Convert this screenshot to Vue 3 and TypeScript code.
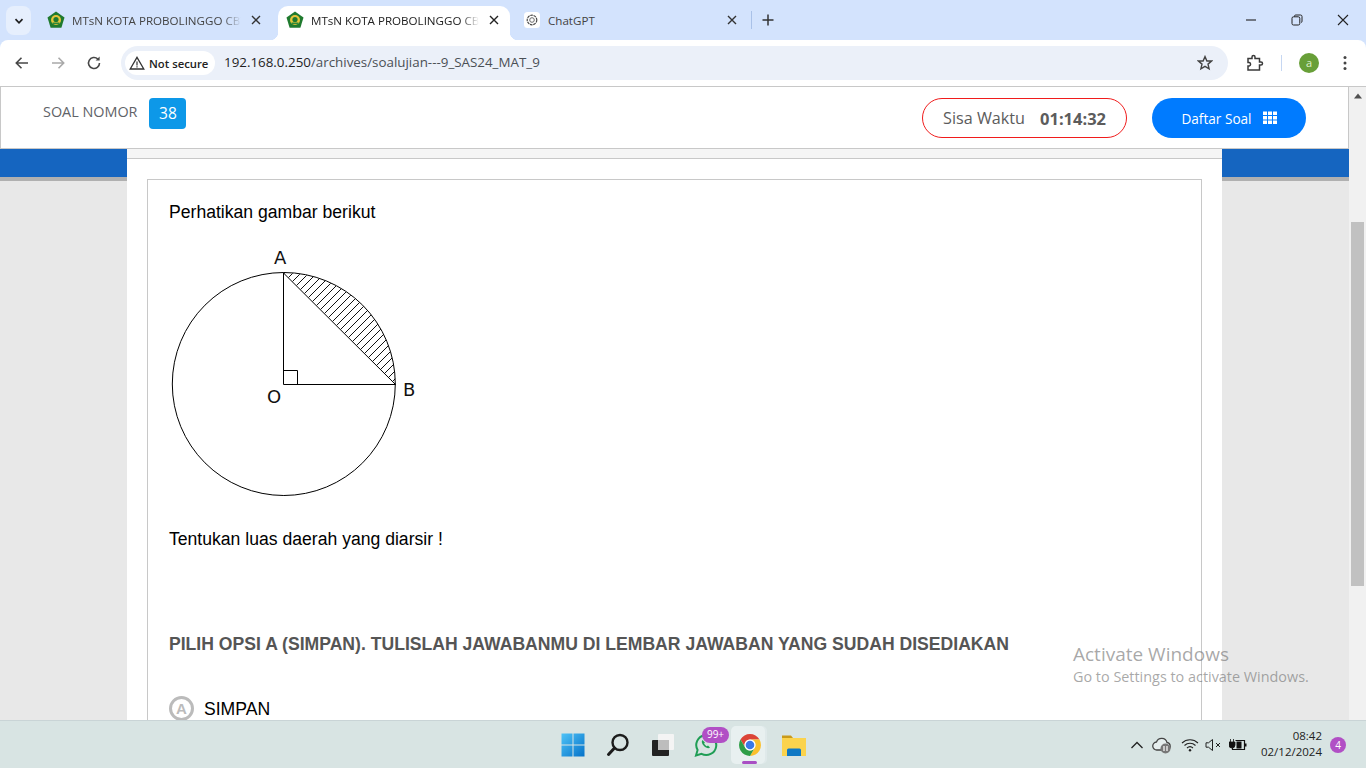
<script setup lang="ts">
const hatch: number[] = []
for (let x = 150; x < 420; x += 8) hatch.push(x)
</script>

<template>
  <div class="screen">
    <div class="tabstrip">
      <button class="tab-menu">
        <svg width="12" height="12" viewBox="0 0 12 12"><path d="M2.5 4.2 6 7.8l3.5-3.6" fill="none" stroke="#1f1f1f" stroke-width="1.7" /></svg>
      </button>
      <div class="tab first">
        <svg class="fav" viewBox="0 0 18 18"><path d="M9 .5 17.500 6.6 14.400 16.800H3.600L.5 6.6Z" fill="#1f7a2e" /><circle cx="9" cy="9" r="5" fill="#e5c53a" /><circle cx="9" cy="8.500" r="2.600" fill="#1f7a2e" /><path d="M5.500 11.500h7v1.600h-7z" fill="#2d8a3b" /></svg>
        <span class="tab-title">MTsN KOTA PROBOLINGGO CBT</span>
        <svg class="tab-x" viewBox="0 0 10 10"><path d="M1 1l8 8M9 1l-8 8" stroke="#333" stroke-width="1.4" /></svg>
      </div>
      <div class="tab active">
        <svg class="fav" viewBox="0 0 18 18"><path d="M9 .5 17.500 6.6 14.400 16.800H3.600L.5 6.6Z" fill="#1f7a2e" /><circle cx="9" cy="9" r="5" fill="#e5c53a" /><circle cx="9" cy="8.500" r="2.600" fill="#1f7a2e" /><path d="M5.500 11.500h7v1.600h-7z" fill="#2d8a3b" /></svg>
        <span class="tab-title">MTsN KOTA PROBOLINGGO CBT</span>
        <svg class="tab-x" viewBox="0 0 10 10"><path d="M1 1l8 8M9 1l-8 8" stroke="#222" stroke-width="1.4" /></svg>
      </div>
      <div class="tab third">
        <svg class="fav gpt" viewBox="0 0 18 18"><rect width="18" height="18" rx="4" fill="#fff" /><circle cx="9" cy="9" r="5.400" fill="none" stroke="#444" stroke-width="1.300" stroke-dasharray="3 .8" /><circle cx="9" cy="9" r="2.600" fill="none" stroke="#666" stroke-width="1.100" /></svg>
        <span class="tab-title">ChatGPT</span>
        <svg class="tab-x" viewBox="0 0 10 10"><path d="M1 1l8 8M9 1l-8 8" stroke="#333" stroke-width="1.4" /></svg>
      </div>
      <span class="tab-sep"></span>
      <svg class="tab-plus" viewBox="0 0 12 12"><path d="M6 .5v11M.5 6h11" stroke="#333" stroke-width="1.5" /></svg>
      <div class="win-btns">
        <svg viewBox="0 0 12 12"><path d="M1 6h10" stroke="#222" stroke-width="1.1" /></svg>
        <svg viewBox="0 0 12 12"><path d="M3.500 2.500V2a1.200 1.200 0 0 1 1.200-1H9.500A1.500 1.500 0 0 1 11 2.500v4.800A1.200 1.200 0 0 1 10 8.500" fill="none" stroke="#222" /><rect x="1" y="2.800" width="7.800" height="8.200" rx="1.500" fill="none" stroke="#222" /></svg>
        <svg viewBox="0 0 12 12"><path d="M1 1l10 10M11 1 1 11" stroke="#222" stroke-width="1.1" /></svg>
      </div>
    </div>

    <div class="toolbar">
      <svg class="nav" viewBox="0 0 16 16"><path d="M14 8H2.500M7.500 2.800 2.300 8l5.200 5.200" fill="none" stroke="#474747" stroke-width="1.600" /></svg>
      <svg class="nav" viewBox="0 0 16 16"><path d="M2 8h11.500M8.500 2.800 13.700 8l-5.200 5.200" fill="none" stroke="#a9a9a9" stroke-width="1.600" /></svg>
      <svg class="nav reload" viewBox="0 0 16 16"><path d="M13.500 8A5.500 5.500 0 1 1 11.800 4" fill="none" stroke="#474747" stroke-width="1.600" /><path d="M13.600 1.500v4h-4z" fill="#474747" /></svg>
      <div class="omnibox">
        <div class="chip">
          <svg width="16" height="14" viewBox="0 0 16 14"><path d="M8 1.300 14.800 13H1.200Z" fill="none" stroke="#333" stroke-width="1.300" /><path d="M8 5.500v4M8 10.300v1.300" stroke="#333" stroke-width="1.200" /></svg>
          <span>Not secure</span>
        </div>
        <span class="url"><b>192.168.0.250</b>/archives/soalujian---9_SAS24_MAT_9</span>
        <svg class="star" viewBox="0 0 16 16"><path d="M8 1.600 9.900 6h4.700l-3.600 3.100 1.100 4.700L8 11.300l-4.100 2.500L5 9.100 1.400 6h4.700Z" fill="none" stroke="#444" stroke-width="1.400" /></svg>
      </div>
      <svg class="ext" viewBox="0 0 18 18"><path d="M2 4.500h4V3a1.500 1.500 0 0 1 3 0v1.500h4.500V8H15a1.500 1.500 0 0 1 0 3h-1.500v5H2v-4h1.200a1.800 1.800 0 0 0 0-3.500H2Z" fill="none" stroke="#3a3a3a" stroke-width="1.500" /></svg>
      <span class="bar-sep"></span>
      <span class="avatar">a</span>
      <svg class="dots" viewBox="0 0 4 16"><circle cx="2" cy="2.500" r="1.500" fill="#444" /><circle cx="2" cy="8" r="1.500" fill="#444" /><circle cx="2" cy="13.500" r="1.500" fill="#444" /></svg>
    </div>

    <div class="viewport">
      <div class="page">
        <header class="exam-head">
          <div class="nomor">
            <span class="nomor-label">SOAL NOMOR</span>
            <span class="nomor-val">38</span>
          </div>
          <div class="timer">
            <span>Sisa Waktu</span>
            <b>01:14:32</b>
          </div>
          <button class="daftar">
            <span>Daftar Soal</span>
            <svg width="14" height="14" viewBox="0 0 14 14"><path d="M0 .5h4v3.500H0zM5 .5h4v3.500H5zM10 .5h4v3.500h-4zM0 5h4v3.500H0zM5 5h4v3.500H5zM10 5h4v3.500h-4zM0 9.500h4V13H0zM5 9.500h4V13H5zM10 9.500h4V13h-4z" fill="#fff" /></svg>
          </button>
        </header>
        <div class="stage">
          <div class="sheet">
            <div class="sheet-top"></div>
            <div class="qbox">
              <p class="q-first">Perhatikan gambar berikut</p>
              <svg class="figure" width="260" height="265" viewBox="169 240 260 265">
                <defs>
                  <clipPath id="seg"><path d="M284 273A111.500 111.500 0 0 1 395.500 384Z" /></clipPath>
                </defs>
                <g clip-path="url(#seg)" shape-rendering="crispEdges">
                  <line v-for="x in hatch" :key="x" :x1="x" y1="400" :x2="x + 150" y2="250" stroke="#111" stroke-width="1" />
                </g>
                <g fill="none" stroke="#000" stroke-width="1">
                  <circle cx="283.800" cy="384" r="111.500" />
                  <path d="M283.500 273V384.500H395.500L283.500 273" />
                  <path d="M283.500 370.500H297.500V384.500" />
                </g>
                <text x="274" y="264">A</text>
                <text x="403" y="396">B</text>
                <text x="267" y="403">O</text>
              </svg>
              <p class="q-second">Tentukan luas daerah yang diarsir !</p>
              <p class="q-note">PILIH OPSI A (SIMPAN). TULISLAH JAWABANMU DI LEMBAR JAWABAN YANG SUDAH DISEDIAKAN</p>
              <div class="option">
                <span class="opt-letter">A</span>
                <span class="opt-text">SIMPAN</span>
              </div>
            </div>
          </div>
        </div>
      </div>
      <div class="scrollbar">
        <svg class="sb-arrow" viewBox="0 0 10 6"><path d="M5 .5 9 5.500H1Z" fill="#505050" /></svg>
        <div class="sb-thumb"></div>
      </div>
      <div class="activate">
        <div class="act-1">Activate Windows</div>
        <div class="act-2">Go to Settings to activate Windows.</div>
      </div>
    </div>

    <div class="taskbar">
      <div class="task-icons">
        <svg class="ti" viewBox="0 0 24 24">
          <defs><linearGradient id="w" x1="0" y1="0" x2="1" y2="1"><stop offset="0" stop-color="#4fc3f7" /><stop offset="1" stop-color="#0572c9" /></linearGradient></defs>
          <path d="M.5.500h11v11H.5zM12.500.500h11v11h-11zM.5 12.500h11v11H.5zM12.500 12.500h11v11h-11z" fill="url(#w)" />
        </svg>
        <svg class="ti" viewBox="0 0 24 24"><circle cx="14" cy="9.500" r="7.500" fill="none" stroke="#1c1c1c" stroke-width="2.400" /><path d="M8.500 15 2.500 21.500" stroke="#1c1c1c" stroke-width="3" stroke-linecap="round" /></svg>
        <svg class="ti" viewBox="0 0 24 24"><rect x="7" y="1" width="16" height="16" rx="1" fill="#f4f4f4" /><rect x="1" y="7" width="17" height="16" rx="1" fill="#222" /><rect x="7" y="7" width="11" height="10" fill="#bdbdbd" /></svg>
        <div class="ti-wrap">
          <svg class="ti" viewBox="0 0 24 24"><path d="M2 22.500 3.600 17A10 10 0 1 1 7.500 20.800Z" fill="none" stroke="#1f9d55" stroke-width="2" /><path d="M8.500 7c-1.500 1.500-.5 4 1.500 6s4.500 3 6 1.500l-2-2-1.200.8c-1-.5-2.200-1.700-2.700-2.700l.8-1.200Z" fill="#1f9d55" /></svg>
          <span class="badge-99">99+</span>
        </div>
        <div class="chrome-slot">
          <svg class="ti" viewBox="0 0 24 24">
            <path d="M2.500 6.500A11 11 0 0 1 21.500 6.500H12A5.500 5.500 0 0 0 7.240 14.750Z" fill="#db4437" />
            <path d="M21.500 6.500A11 11 0 0 1 12 23L16.760 14.750A5.500 5.500 0 0 0 12 6.500Z" fill="#fbc02d" />
            <path d="M12 23A11 11 0 0 1 2.500 6.500L7.240 14.750A5.500 5.500 0 0 0 16.760 14.750Z" fill="#2e9e47" />
            <circle cx="12" cy="12" r="5.500" fill="#fff" /><circle cx="12" cy="12" r="4.300" fill="#3b78e7" />
          </svg>
          <span class="run-dot"></span>
        </div>
        <svg class="ti" viewBox="0 0 24 24"><path d="M0 2.500h9l2 2.500H0z" fill="#c99a1a" /><path d="M0 5h24v18H0z" fill="#fbd34d" /><path d="M5 17a1.500 1.500 0 0 1 1.500-1.500h11A1.500 1.500 0 0 1 19 17v6H5z" fill="#0f78c4" /></svg>
      </div>
      <div class="tray">
        <svg class="tr chev" viewBox="0 0 14 10"><path d="M1.500 8 7 2.500 12.500 8" fill="none" stroke="#222" stroke-width="1.300" /></svg>
        <svg class="tr cloud" viewBox="0 0 20 18"><path d="M5 14a4 4 0 0 1-.5-8A5.500 5.500 0 0 1 15 6.500 3.800 3.800 0 0 1 15 14Z" fill="#e6eeee" stroke="#444" stroke-width="1.300" /><circle cx="13.500" cy="12.500" r="5" fill="#777" /><path d="M12 10v5M15 10v5" stroke="#fff" stroke-width="1.200" /></svg>
        <svg class="tr wifi" viewBox="0 0 18 14"><path d="M1 5a11.500 11.500 0 0 1 16 0M3.500 7.500a8 8 0 0 1 11 0M6 10a4.500 4.500 0 0 1 6 0" fill="none" stroke="#222" stroke-width="1.100" /><circle cx="9" cy="12.300" r="1.200" fill="#222" /></svg>
        <svg class="tr vol" viewBox="0 0 18 14"><path d="M1 4.800h2.500L7.500 1.500v11L3.500 9.200H1Z" fill="none" stroke="#222" /><path d="M11 5l4 4M15 5l-4 4" stroke="#222" /></svg>
        <svg class="tr bat" viewBox="0 0 18 14"><path d="M1.500 1v3M4.500 1v3M0 4h6v3a3 3 0 0 1-6 0Z" stroke="#111" fill="#111" stroke-width=".8" /><path d="M6.500 2.500h9v9h-12v-1.500" fill="none" stroke="#111" stroke-width="1.200" /><path d="M7.500 3.500h5v7h-5z" fill="#111" /><path d="M16 5.500h1.500v3H16z" fill="#111" /></svg>
        <div class="clock">
          <span>08:42</span>
          <span>02/12/2024</span>
        </div>
        <span class="notif">4</span>
      </div>
    </div>
  </div>
</template>

<style scoped>
.screen {
  width: 1366px;
  height: 768px;
  display: flex;
  flex-direction: column;
  overflow: hidden;
  background: #d3e3fd;
  font-family: "Open Sans", "Noto Sans", sans-serif;
  color: #222;
}
.tabstrip {
  height: 40px;
  flex: none;
  background: #d3e3fd;
  display: flex;
  align-items: flex-start;
  padding-left: 6px;
  box-sizing: border-box;
}
.tab-menu {
  width: 25px;
  height: 29px;
  margin-top: 6px;
  border: 0;
  border-radius: 8px;
  background: #e6effd;
  display: flex;
  align-items: center;
  justify-content: center;
  padding: 0;
}
.tab {
  height: 34px;
  margin-top: 6px;
  box-sizing: border-box;
  display: flex;
  align-items: center;
  padding-bottom: 6px;
  font-size: 11.6px;
  color: #444;
  position: relative;
}
.tab.first {
  width: 239px;
  margin-left: 8px;
  padding-left: 8px;
  padding-right: 17px;
}
.tab.active {
  width: 232px;
  padding-left: 8px;
  padding-right: 11px;
  background: #fff;
  border-radius: 10px 10px 0 0;
  color: #222;
}
.tab.active::before,
.tab.active::after {
  content: "";
  position: absolute;
  bottom: 0;
  width: 8px;
  height: 8px;
}
.tab.active::before {
  left: -8px;
  background: radial-gradient(circle at 0 0, transparent 8px, #fff 8.5px);
}
.tab.active::after {
  right: -8px;
  background: radial-gradient(circle at 100% 0, transparent 8px, #fff 8.5px);
}
.tab.third {
  width: 235px;
  padding-left: 14px;
  padding-right: 8px;
}
.fav {
  width: 18px;
  height: 18px;
  flex: none;
  margin-right: 7px;
}
.fav.gpt {
  width: 16px;
  height: 16px;
  margin-right: 8px;
}
.tab-title {
  flex: 1;
  white-space: nowrap;
  overflow: hidden;
  min-width: 0;
  -webkit-mask-image: linear-gradient(to left, transparent 0, #000 18px);
  mask-image: linear-gradient(to left, transparent 0, #000 18px);
}
.third .tab-title {
  -webkit-mask-image: none;
  mask-image: none;
}
.tab-x {
  width: 10px;
  height: 10px;
  flex: none;
  margin-left: 10px;
}
.tab-sep {
  width: 1px;
  height: 18px;
  background: #a9c1e8;
  margin: 11px 0 0 6px;
}
.tab-plus {
  width: 12px;
  height: 12px;
  margin: 14px 0 0 10px;
}
.win-btns {
  margin-left: auto;
  display: flex;
  gap: 34px;
  padding: 14px 17px 0 0;
}
.win-btns svg {
  width: 12px;
  height: 12px;
}
.toolbar {
  height: 47px;
  flex: none;
  background: #fff;
  border-bottom: 1px solid #c8c8c8;
  box-sizing: border-box;
  display: flex;
  align-items: center;
  padding: 0 14px;
  border-radius: 8px 8px 0 0;
}
.nav {
  width: 16px;
  height: 16px;
  flex: none;
  margin-right: 20px;
}
.nav.reload {
  margin-right: 19px;
}
.omnibox {
  width: 1107px;
  height: 34px;
  flex: none;
  border-radius: 17px;
  background: #ebf0f9;
  display: flex;
  align-items: center;
  padding: 0 15px 0 4px;
  box-sizing: border-box;
}
.chip {
  height: 24px;
  width: 90px;
  box-sizing: border-box;
  border-radius: 12px;
  background: #fff;
  display: flex;
  align-items: center;
  gap: 4px;
  padding-left: 4px;
  font-size: 11.3px;
  font-weight: 600;
  color: #222;
  flex: none;
}
.url {
  margin: -2px 0 0 9px;
  font-size: 13.37px;
  color: #4a4f55;
  flex: 1;
}
.url b {
  font-weight: 400;
  color: #1f1f1f;
}
.star {
  width: 16px;
  height: 16px;
}
.ext {
  width: 18px;
  height: 18px;
  margin-left: 18px;
  flex: none;
}
.bar-sep {
  width: 1px;
  height: 16px;
  background: #c6d7f2;
  margin-left: 17px;
}
.avatar {
  width: 20px;
  height: 20px;
  border-radius: 50%;
  background: #689f38;
  color: #dff0cf;
  font-size: 11px;
  text-align: center;
  line-height: 19px;
  margin-left: 17px;
}
.dots {
  width: 4px;
  height: 16px;
  margin-left: 24px;
}
.viewport {
  flex: 1;
  display: flex;
  min-height: 0;
  position: relative;
  overflow: hidden;
}
.page {
  flex: 1;
  min-width: 0;
  display: flex;
  flex-direction: column;
}
.exam-head {
  height: 62px;
  flex: none;
  box-sizing: border-box;
  background: #fff;
  border: 1px solid #c8c8c8;
  border-top: 0;
  display: flex;
  align-items: flex-start;
  padding: 11px 42px 0 42px;
}
.nomor {
  display: flex;
  align-items: flex-start;
  gap: 12px;
  height: 31px;
}
.nomor-label {
  font-size: 14.4px;
  line-height: 28px;
  color: #5f6368;
}
.nomor-val {
  width: 37px;
  height: 31px;
  border-radius: 4px;
  background: #0d98e8;
  color: #fff;
  font-size: 15.5px;
  text-align: center;
  line-height: 31px;
}
.timer {
  margin-left: auto;
  width: 205px;
  height: 40px;
  box-sizing: border-box;
  border: 1px solid #f01c1c;
  border-radius: 20px;
  display: flex;
  align-items: center;
  padding-left: 20px;
  gap: 15px;
  font-size: 16.2px;
  color: #5c5c5c;
}
.timer b {
  font-weight: 700;
  font-size: 16.5px;
}
.daftar {
  width: 154px;
  height: 40px;
  margin-left: 25px;
  border: 0;
  border-radius: 20px;
  background: #007bff;
  color: #fff;
  font: inherit;
  font-size: 13.6px;
  display: flex;
  align-items: center;
  justify-content: center;
  gap: 11px;
  padding: 0;
}
.stage {
  flex: 1;
  min-height: 0;
  overflow: hidden;
  background: linear-gradient(#1565c0 0 28px, #b0b0b0 28px 32px, #e8e8e8 32px);
}
.sheet {
  width: 1095px;
  margin-left: 127px;
  height: 100%;
  background: #fff;
  padding: 0 20px;
  box-sizing: border-box;
}
.sheet-top {
  height: 10px;
  margin: 0 -20px 20px;
  background: #f5f5f5;
  border-bottom: 1px solid #c8c8c8;
  box-sizing: border-box;
}
.qbox {
  border: 1px solid #c8c8c8;
  border-bottom: 0;
  height: 600px;
  padding: 21px 21px 0;
  box-sizing: border-box;
  font-family: "Liberation Sans", Arial, sans-serif;
  font-size: 17.6px;
  color: #000;
}
.qbox p {
  margin: 0;
}
.q-first {
  line-height: 22px;
}
.figure {
  display: block;
  margin-top: 17px;
}
.figure text {
  font-family: "DejaVu Sans", sans-serif;
  font-size: 18px;
  fill: #111;
}
.qbox .q-second {
  margin-top: 23px;
  line-height: 22px;
}
.qbox .q-note {
  margin-top: 83px;
  line-height: 22px;
  font-weight: 700;
  color: #555;
}
.option {
  display: flex;
  align-items: center;
  gap: 10px;
  margin-top: 41px;
}
.opt-letter {
  width: 25px;
  height: 25px;
  box-sizing: border-box;
  border: 3px solid #bbb;
  border-radius: 50%;
  color: #bbb;
  font-weight: 700;
  font-size: 15px;
  text-align: center;
  line-height: 19px;
}
.opt-text {
  padding-top: 2px;
}
.scrollbar {
  width: 17px;
  flex: none;
  background: #f1f1f1;
  position: relative;
  display: flex;
  flex-direction: column;
  align-items: center;
}
.sb-arrow {
  width: 10px;
  height: 6px;
  margin-top: 6px;
}
.sb-thumb {
  width: 13px;
  height: 364px;
  margin-top: 123px;
  background: #c1c1c1;
}
.activate {
  position: absolute;
  left: 1073px;
  top: 555px;
  color: rgba(110, 110, 110, 0.6);
  pointer-events: none;
}
.act-1 {
  font-size: 19px;
  line-height: 25px;
}
.act-2 {
  font-size: 14.4px;
  line-height: 20px;
}
.taskbar {
  height: 48px;
  flex: none;
  background: #d8e4e3;
  border-top: 1px solid #c9d4d6;
  box-sizing: border-box;
  display: flex;
  align-items: center;
}
.task-icons {
  display: flex;
  align-items: center;
  gap: 21px;
  margin-left: 561px;
  height: 47px;
}
.ti {
  width: 24px;
  height: 24px;
  display: block;
}
.ti-wrap {
  position: relative;
  margin-left: -2px;
}
.badge-99 {
  position: absolute;
  left: 8px;
  top: -6px;
  width: 27px;
  height: 16px;
  border-radius: 8px;
  background: #b14fc5;
  color: #fff;
  font-size: 10px;
  line-height: 15px;
  text-align: center;
}
.chrome-slot {
  width: 34px;
  height: 38px;
  box-sizing: border-box;
  padding-left: 4px;
  border-radius: 5px;
  background: #e8f0f0;
  box-shadow: 2px 0 0 #dfe9ea;
  display: flex;
  align-items: center;
  justify-content: center;
  position: relative;
  margin: 0 -4px 0 -8px;
}
.run-dot {
  position: absolute;
  left: 11px;
  bottom: 0;
  width: 15px;
  height: 3px;
  border-radius: 2px;
  background: #a94fc4;
}
.tray {
  margin-left: auto;
  display: flex;
  align-items: center;
  padding-right: 20px;
}
.tr {
  display: block;
  flex: none;
}
.chev {
  width: 14px;
  height: 10px;
}
.cloud {
  width: 20px;
  height: 18px;
  margin-left: 8px;
}
.wifi {
  width: 18px;
  height: 14px;
  margin-left: 9px;
}
.vol {
  width: 18px;
  height: 14px;
  margin-left: 6px;
}
.bat {
  width: 18px;
  height: 14px;
  margin-left: 6px;
}
.clock {
  display: flex;
  flex-direction: column;
  align-items: flex-end;
  margin: -2px 0 0 14px;
  font-size: 11.5px;
  line-height: 16px;
  color: #222;
}
.notif {
  width: 16px;
  height: 16px;
  border-radius: 50%;
  background: #b14fc5;
  color: #fff;
  font-size: 10px;
  line-height: 16px;
  text-align: center;
  margin-left: 8px;
}
</style>

<style>
html,
body {
  margin: 0;
  overflow: hidden;
}
</style>
